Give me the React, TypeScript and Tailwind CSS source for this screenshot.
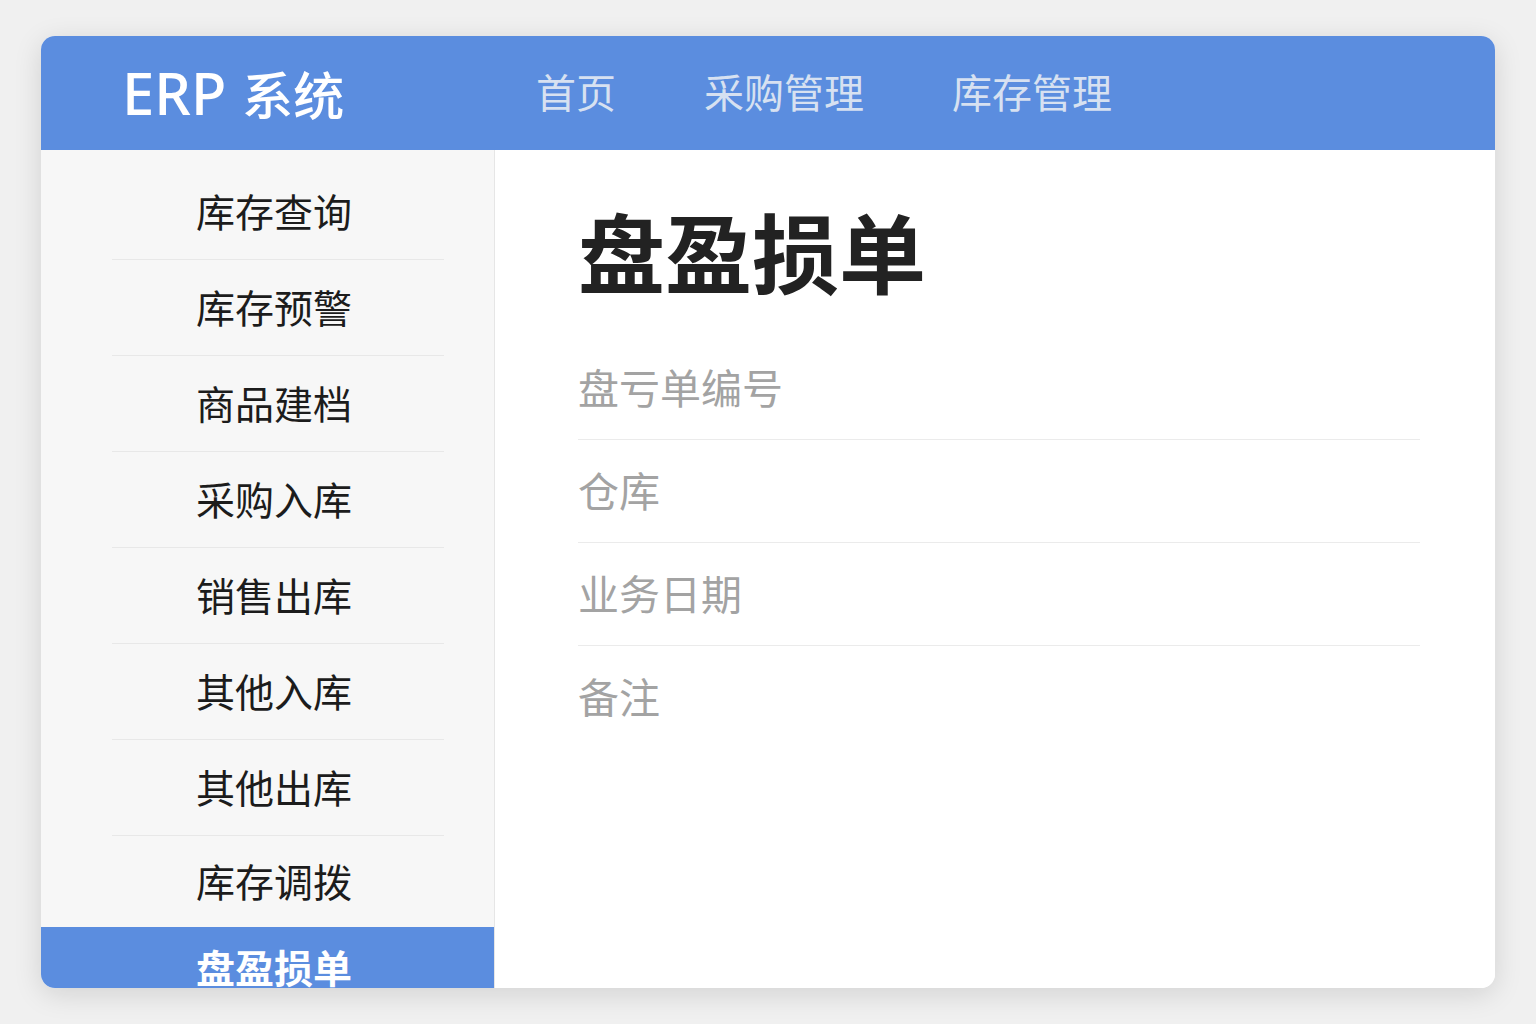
const navItems = ["首页", "采购管理", "库存管理"];

const menuItems = [
  "库存查询",
  "库存预警",
  "商品建档",
  "采购入库",
  "销售出库",
  "其他入库",
  "其他出库",
  "库存调拨",
];

const fields = ["盘亏单编号", "仓库", "业务日期", "备注"];

const font = "font-['Noto_Sans','Noto_Sans_CJK_SC',sans-serif]";

export default function App() {
  return (
    <div className={`min-h-screen bg-[#f0f0f0] pt-[36px] pl-[41px] ${font}`}>
      <div className="flex h-[952px] w-[1454px] flex-col overflow-hidden rounded-[14px] bg-white shadow-[0_6px_28px_rgba(0,0,0,0.13)]">
        {/* 顶部导航 */}
        <header className="flex h-[114px] shrink-0 items-center bg-[#5b8ddf] pl-[81px]">
          <div className="flex w-[414px] items-baseline font-medium text-white">
            <span className="text-[58px] leading-none">ERP</span>
            <span className="ml-[16px] text-[51px] leading-none">系统</span>
          </div>
          <nav className="flex items-center gap-[88px]">
            {navItems.map((item) => (
              <span key={item} className="text-[40px] leading-none text-[#d7e1f1]">
                {item}
              </span>
            ))}
          </nav>
        </header>

        <div className="flex min-h-0 flex-1">
          {/* 侧边菜单 */}
          <aside className="w-[454px] shrink-0 border-r border-[#e6e6e6] bg-[#f7f7f7] pt-[14px]">
            {menuItems.map((item, i) => (
              <div
                key={item}
                className={`ml-[71px] mr-[50px] flex items-center pl-[84px] ${
                  i < menuItems.length - 1 ? "h-[96px] border-b border-[#e8e8e8]" : "h-[91px]"
                }`}
              >
                <span className="text-[39px] leading-none text-[#1c1c1c]">{item}</span>
              </div>
            ))}
            <div className="flex h-[80px] items-center bg-[#5b8ddf] pl-[155px]">
              <span className="text-[39px] font-bold leading-none text-white">盘盈损单</span>
            </div>
          </aside>

          {/* 表单区域 */}
          <main className="flex-1 bg-white pl-[83px] pr-[75px] pt-[61px]">
            <h1 className="text-[87px] font-bold leading-none text-[#222]">盘盈损单</h1>
            <div className="mt-[39px]">
              {fields.map((label, i) => (
                <div
                  key={label}
                  className={`flex h-[103px] items-center ${
                    i < fields.length - 1 ? "border-b border-[#ebebeb]" : ""
                  }`}
                >
                  <span className="text-[41px] leading-none text-[#a3a3a3]">{label}</span>
                </div>
              ))}
            </div>
          </main>
        </div>
      </div>
    </div>
  );
}
